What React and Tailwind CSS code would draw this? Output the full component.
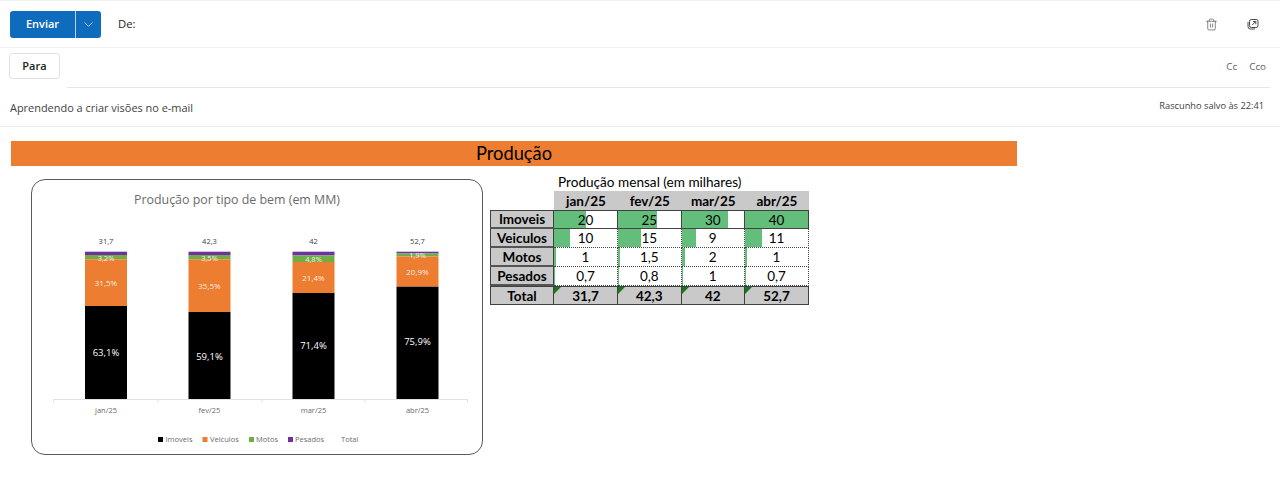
import React from 'react';
import { ChevronDown, Trash2 } from 'lucide-react';

const bars = [
  { x: 85, label: 'jan/25', total: '31,7', tops: [251.7, 255, 259.3, 306], pcts: [['3,2%', 257.5], ['31,5%', 283], ['63,1%', 353]] },
  { x: 188.5, label: 'fev/25', total: '42,3', tops: [251.7, 255, 259.3, 312], pcts: [['3,5%', 257.5], ['35,5%', 286], ['59,1%', 357]] },
  { x: 292.5, label: 'mar/25', total: '42', tops: [251.7, 255.5, 262, 293], pcts: [['4,8%', 258.7], ['21,4%', 278], ['71,4%', 346]] },
  { x: 396.5, label: 'abr/25', total: '52,7', tops: [251.7, 253.5, 256.5, 286.7], pcts: [['1,9%', 255], ['20,9%', 272], ['75,9%', 342]] },
];

const legend = [
  { color: '#000000', x: 158, tx: 165.5, name: 'Imoveis' },
  { color: '#ED7D31', x: 202.5, tx: 210, name: 'Veiculos' },
  { color: '#70AD47', x: 249, tx: 256, name: 'Motos' },
  { color: '#7030A0', x: 288, tx: 295, name: 'Pesados' },
];

const rows = [
  { name: 'Imoveis', values: ['20', '25', '30', '40'] },
  { name: 'Veiculos', values: ['10', '15', '9', '11'] },
  { name: 'Motos', values: ['1', '1,5', '2', '1'] },
  { name: 'Pesados', values: ['0,7', '0,8', '1', '0,7'] },
];

const Chart = () => (
  <svg viewBox="32 180 450 274" className="block w-[450px] h-[274px]" style={{ fontFamily: '"Open Sans", sans-serif' }}>
    <text x="237" y="204" textAnchor="middle" fontSize="12.4" fill="#6b6b6b">Produção por tipo de bem (em MM)</text>
    {bars.map((b) => (
      <g key={b.label}>
        <text x={b.x + 21} y="244" textAnchor="middle" fontSize="7.5" fill="#404040">{b.total}</text>
        <rect x={b.x} y={b.tops[0]} width="42" height={b.tops[1] - b.tops[0]} fill="#7030A0" />
        <rect x={b.x} y={b.tops[1]} width="42" height={b.tops[2] - b.tops[1]} fill="#70AD47" />
        <rect x={b.x} y={b.tops[2]} width="42" height={b.tops[3] - b.tops[2]} fill="#ED7D31" />
        <rect x={b.x} y={b.tops[3]} width="42" height={399 - b.tops[3]} fill="#000000" />
        {b.pcts.map(([t, y], i) => (
          <text key={t} x={b.x + 21} y={y + 3} textAnchor="middle" fontSize={i === 2 ? 9.5 : i === 1 ? 8 : 7.5} fill="#ffffff" fillOpacity={i === 2 ? 1 : 0.9}>{t}</text>
        ))}
        <text x={b.x + 21} y="413" textAnchor="middle" fontSize="7.5" fill="#6b6b6b">{b.label}</text>
      </g>
    ))}
    <path d="M53 399.5H468M53.5 399.5v3M158 399.5v3M262 399.5v3M365 399.5v3M467.5 399.5v3" stroke="#e2e2e2" fill="none" />
    {legend.map((l) => (
      <g key={l.name}>
        <rect x={l.x} y="437" width="5" height="5" fill={l.color} />
        <text x={l.tx} y="442" fontSize="7.5" fill="#6b6b6b">{l.name}</text>
      </g>
    ))}
    <text x="341" y="442" fontSize="7.5" fill="#6b6b6b">Total</text>
  </svg>
);

const PopoutIcon = () => (
  <svg width="12" height="12" viewBox="0 0 12 12" fill="none" stroke="#4a4a4a" strokeWidth="1">
    <rect x="2.5" y="1.5" width="8.5" height="8" rx="1.8" />
    <path d="M1 4v4.5a2.5 2.5 0 0 0 2.5 2.5H8" />
    <path d="M5.2 7 8.6 3.6M6 3.5h2.8v2.8" />
  </svg>
);

const TotalMark = () => (
  <svg width="7" height="7" viewBox="0 0 7 7" className="absolute left-0 top-0">
    <path d="M0 0h7L0 7z" fill="#15761f" />
  </svg>
);

const ProductionTable = () => (
  <div className="w-[320px] text-[13.5px] text-black" style={{ fontFamily: 'Lato, sans-serif' }}>
    <div className="h-[13px] pl-[68px] leading-[8px] text-[13.6px] whitespace-nowrap">Produção mensal (em milhares)</div>
    <div className="grid grid-cols-[64px_64px_63.5px_63.5px_64px] auto-rows-[19px] w-[319.5px]">
      <div />
      {['jan/25', 'fev/25', 'mar/25', 'abr/25'].map((m) => (
        <div key={m} className="flex items-center justify-center pt-[1px] bg-[#c9c9c9] font-bold">{m}</div>
      ))}
      {rows.map((row, r) => (
        <React.Fragment key={row.name}>
          <div className={`flex items-center justify-center pt-[1px] bg-[#c9c9c9] font-bold border-l border-r border-[#404040] border-b-2 border-b-[#555555] ${r === 0 ? 'border-t border-t-[#404040]' : ''}`}>{row.name}</div>
          {row.values.map((v, c) => (
            <div key={c} className={`relative flex items-center justify-center pt-[1px] bg-white border-b border-dotted border-b-[#444444] ${c === 3 ? 'border-r border-r-[#404040]' : 'border-r border-dotted border-r-[#444444]'} ${r === 0 ? 'border-t border-t-[#404040] border-solid' : ''}`}>
              <div className="absolute left-0 top-0 bottom-0 bg-[#63BE7B]" style={{ width: `${(parseFloat(v.replace(',', '.')) / 40) * 100}%` }} />
              <span className="relative">{v}</span>
            </div>
          ))}
        </React.Fragment>
      ))}
      <div className="flex items-center justify-center pt-[1px] bg-[#c9c9c9] font-bold border border-[#404040]">Total</div>
      {['31,7', '42,3', '42', '52,7'].map((v) => (
        <div key={v} className="relative flex items-center justify-center pt-[1px] bg-[#c9c9c9] font-bold border-t border-b border-r border-[#404040]">
          <TotalMark />
          {v}
        </div>
      ))}
    </div>
  </div>
);

export default function App() {
  return (
    <div className="w-[1280px] h-[477px] bg-white overflow-hidden" style={{ fontFamily: '"Open Sans", sans-serif' }}>
      {/* Topo */}
      <div className="h-[48px] flex items-center pl-[10px] pr-[21px] border-t border-b border-[#f0f0f0]">
        <div className="flex h-[27px] w-[91px] rounded-[3px] bg-[#0F6CBD] text-white text-[11px] font-semibold">
          <div className="w-[66px] flex items-center justify-center border-r border-[#b5d3ee]">Enviar</div>
          <div className="flex-1 flex items-center justify-center"><ChevronDown size={15} strokeWidth={1} /></div>
        </div>
        <span className="ml-[17px] text-[11.3px] text-[#242424]">De:</span>
        <div className="ml-auto flex items-center gap-[29px]">
          <Trash2 size={13} strokeWidth={1.2} color="#4a4a4a" />
          <PopoutIcon />
        </div>
      </div>

      {/* Para */}
      <div className="h-[40px] flex pl-[9px] pr-[10px]">
        <div className="mt-[5px] h-[26px] w-[51px] flex items-center justify-center rounded-[3px] border border-[#e2e2e2] text-[11px] font-semibold text-[#242424]">Para</div>
        <div className="ml-[7px] flex-1 flex items-start justify-end gap-[12px] pr-[4px] pt-[12px] border-b border-[#e6e6e6] text-[9.8px] text-[#616161]">
          <span>Cc</span>
          <span>Cco</span>
        </div>
      </div>

      {/* Assunto */}
      <div className="h-[39px] flex items-start justify-between pl-[10px] pr-[16px] border-b border-[#ececec]">
        <span className="mt-[12px] text-[10.95px] text-[#424242]">Aprendendo a criar visões no e-mail</span>
        <span className="mt-[11px] text-[9.25px] text-[#424242]">Rascunho salvo às 22:41</span>
      </div>

      {/* Corpo do e-mail */}
      <div className="pt-[14px] pl-[11px]">
        <div className="w-[1006px] h-[25px] flex items-center justify-center bg-[#ED7D31] text-[18.3px] text-black" style={{ fontFamily: 'Lato, sans-serif' }}>Produção</div>
        <div className="mt-[13px] ml-[20px] flex items-start">
          <div className="w-[452px] h-[276px] rounded-[14px] border border-[#5a5a5a] bg-white overflow-hidden">
            <Chart />
          </div>
          <div className="ml-[7px] -mt-[1px]">
            <ProductionTable />
          </div>
        </div>
      </div>
    </div>
  );
}
